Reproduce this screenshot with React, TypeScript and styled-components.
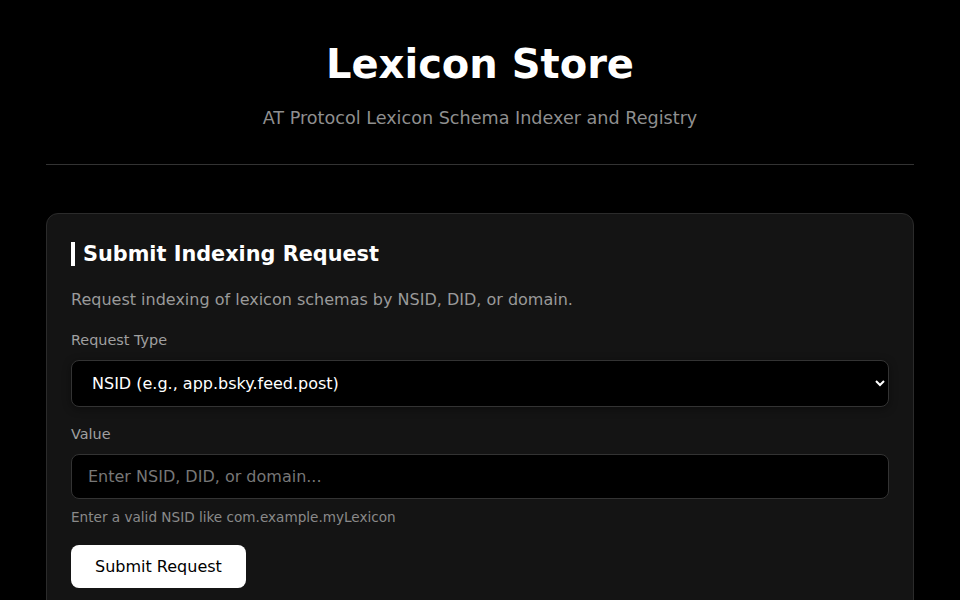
import React from 'react';
import { styled, createGlobalStyle } from 'styled-components';

const GlobalStyle = createGlobalStyle`
  * {
    box-sizing: border-box;
  }
  body {
    margin: 0;
    background: #000;
    color: #fff;
    font-family: 'DejaVu Sans', sans-serif;
  }
`;

const Container = styled.div`
  max-width: 900px;
  margin: 0 auto;
  padding: 0 16px;
`;

const Header = styled.header`
  text-align: center;
  padding: 40px 0 32px;
  border-bottom: 1px solid #333;
`;

const Title = styled.h1`
  margin: 0;
  font-size: 40px;
  line-height: 48px;
  font-weight: 700;
`;

const Subtitle = styled.p`
  margin: 17px 0 0;
  font-size: 17.6px;
  line-height: 27px;
  color: #8f8f8f;
`;

const Card = styled.section`
  margin-top: 48px;
  background: #141414;
  border: 1px solid #2b2b2b;
  border-radius: 12px;
  padding: 28px 24px 24px;
`;

const CardTitle = styled.h2`
  margin: 0;
  font-size: 20.8px;
  line-height: 24px;
  font-weight: 700;
  border-left: 4px solid #fff;
  padding-left: 8px;
`;

const Description = styled.p`
  margin: 22px 0 18px;
  font-size: 16px;
  line-height: 24px;
  color: #9a9a9a;
`;

const Field = styled.div<{ $gap?: number }>`
  margin-bottom: ${({ $gap }) => $gap ?? 17}px;
`;

const Label = styled.label`
  display: block;
  font-size: 14.4px;
  line-height: 21px;
  color: #a0a0a0;
  margin-bottom: 9px;
`;

const Select = styled.select`
  display: block;
  width: 100%;
  height: 47px;
  padding: 0 16px;
  background: #000;
  color: #fff;
  border: 1px solid #333;
  border-radius: 8px;
  font-family: inherit;
  font-size: 16px;
  color-scheme: dark;
  box-shadow: 0 2px 8px rgba(0, 0, 0, 0.4);
`;

const Input = styled.input`
  display: block;
  width: 100%;
  height: 45px;
  padding: 0 16px;
  background: #000;
  color: #fff;
  border: 1px solid #333;
  border-radius: 8px;
  font-family: inherit;
  font-size: 16px;

  &::placeholder {
    color: #777;
  }
`;

const Hint = styled.div`
  margin-top: 8px;
  font-size: 13.6px;
  line-height: 21px;
  color: #8a8a8a;
`;

const Button = styled.button`
  margin-top: 17px;
  padding: 0 24px;
  height: 43px;
  background: #fff;
  color: #000;
  border: 0;
  border-radius: 8px;
  font-family: inherit;
  font-size: 16px;
  cursor: pointer;
`;

const App = () => (
  <>
    <GlobalStyle />
    <Container>
      <Header>
        <Title>Lexicon Store</Title>
        <Subtitle>AT Protocol Lexicon Schema Indexer and Registry</Subtitle>
      </Header>
      <Card>
        <CardTitle>Submit Indexing Request</CardTitle>
        <Description>
          Request indexing of lexicon schemas by NSID, DID, or domain.
        </Description>
        <Field>
          <Label htmlFor="type">Request Type</Label>
          <Select id="type" defaultValue="nsid">
            <option value="nsid">NSID (e.g., app.bsky.feed.post)</option>
            <option value="did">DID (e.g., did:plc:...)</option>
            <option value="domain">Domain (e.g., bsky.app)</option>
          </Select>
        </Field>
        <Field $gap={0}>
          <Label htmlFor="value">Value</Label>
          <Input id="value" placeholder="Enter NSID, DID, or domain..." />
          <Hint>Enter a valid NSID like com.example.myLexicon</Hint>
        </Field>
        <Button type="button">Submit Request</Button>
      </Card>
    </Container>
  </>
);

export default App;
